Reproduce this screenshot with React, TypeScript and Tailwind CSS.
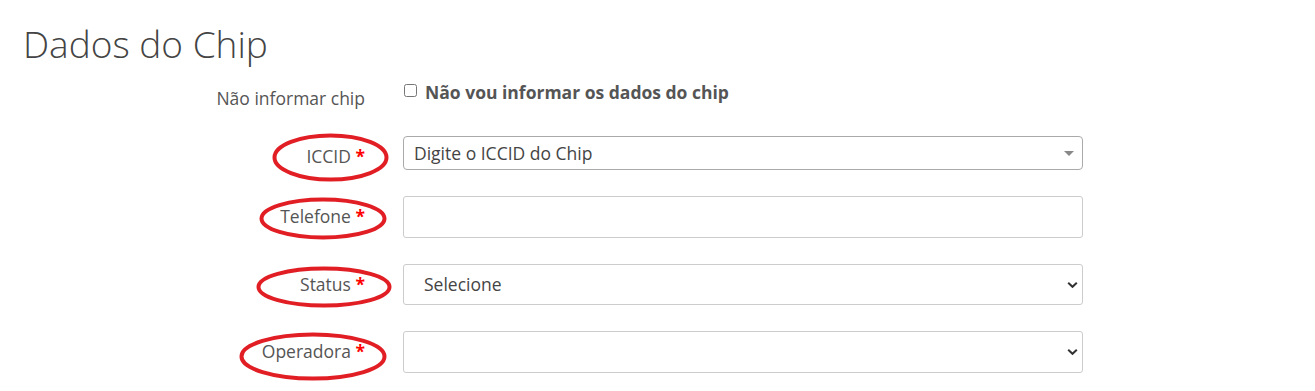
import { ChangeEvent, useState } from 'react';

type Box = { left: number; top: number; width: number; height: number };

function Ring({ left, top, width, height }: Box) {
  return (
    <svg
      className="absolute pointer-events-none"
      style={{ left, top, width, height }}
      viewBox={`0 0 ${width} ${height}`}
    >
      <ellipse
        cx={width / 2}
        cy={height / 2}
        rx={width / 2 - 2.5}
        ry={height / 2 - 2.5}
        fill="none"
        stroke="#e21e25"
        strokeWidth="4"
      />
    </svg>
  );
}

function Label({ text, ring }: { text: string; ring: Box }) {
  return (
    <div className="relative w-[365px] shrink-0 pt-[8px] text-right">
      <Ring {...ring} />
      <span className="relative text-[17.5px] leading-6 text-[#555]">
        {text} <span className="font-bold text-[#ff0000]">*</span>
      </span>
    </div>
  );
}

function Chevron() {
  return (
    <svg className="absolute right-[5px] top-1/2 -translate-y-1/2 w-[11px] h-[7px] pointer-events-none" viewBox="0 0 11 7">
      <path d="M1.2 1.2 L5.5 5.3 L9.8 1.2" fill="none" stroke="#333" strokeWidth="2" />
    </svg>
  );
}

export default function App() {
  const [semChip, setSemChip] = useState(false);
  const [telefone, setTelefone] = useState('');

  return (
    <div className="min-h-[391px] bg-white font-['Open_Sans',sans-serif] text-[#555]">
      <h1 className="pt-[23px] pl-[23px] text-[37px] leading-[42px] font-light text-[#444]">Dados do Chip</h1>

      <div className="mt-[15px] flex items-start">
        <div className="w-[365px] shrink-0 text-right pt-[6px] text-[17.5px] leading-6 text-[#555]">Não informar chip</div>
        <label className="ml-[38px] flex items-center">
          <input
            type="checkbox"
            checked={semChip}
            onChange={(e: ChangeEvent<HTMLInputElement>) => setSemChip(e.target.checked)}
            className="w-[13px] h-[13px] m-0 mt-[-4px] ml-[1px]"
          />
          <span className="ml-[8px] text-[17.5px] leading-6 font-bold text-[#555]">Não vou informar os dados do chip</span>
        </label>
      </div>

      <div className="mt-[26px] flex items-start">
        <Label text="ICCID" ring={{ left: 272, top: -3, width: 117, height: 49 }} />
        <div className="relative ml-[38px] w-[680px] h-[34px] border border-[#aaa] rounded-[4px] flex items-center pl-[10px] text-[17.5px] text-[#444]">
          Digite o ICCID do Chip
          <span className="absolute right-[8px] top-[14px] w-0 h-0 border-l-[5px] border-r-[5px] border-t-[5px] border-l-transparent border-r-transparent border-t-[#888]" />
        </div>
      </div>

      <div className="mt-[26px] flex items-start">
        <Label text="Telefone" ring={{ left: 259, top: 1, width: 128, height: 43 }} />
        <input
          value={telefone}
          onChange={(e: ChangeEvent<HTMLInputElement>) => setTelefone(e.target.value)}
          className="ml-[38px] w-[680px] h-[42px] border border-[#ccc] rounded-[3px] px-3 text-[17.5px] outline-none"
        />
      </div>

      <div className="mt-[26px] flex items-start">
        <Label text="Status" ring={{ left: 256, top: 2, width: 136, height: 42 }} />
        <div className="relative ml-[38px] w-[680px] h-[41px]">
          <select className="appearance-none w-full h-full border border-[#ccc] rounded-[3px] pl-[20px] text-[17.5px] text-[#444] bg-white outline-none">
            <option>Selecione</option>
          </select>
          <Chevron />
        </div>
      </div>

      <div className="mt-[26px] flex items-start">
        <Label text="Operadora" ring={{ left: 239, top: 1, width: 148, height: 49 }} />
        <div className="relative ml-[38px] w-[680px] h-[42px]">
          <select className="appearance-none w-full h-full border border-[#ccc] rounded-[3px] pl-[20px] text-[17.5px] text-[#444] bg-white outline-none">
            <option></option>
          </select>
          <Chevron />
        </div>
      </div>
    </div>
  );
}
